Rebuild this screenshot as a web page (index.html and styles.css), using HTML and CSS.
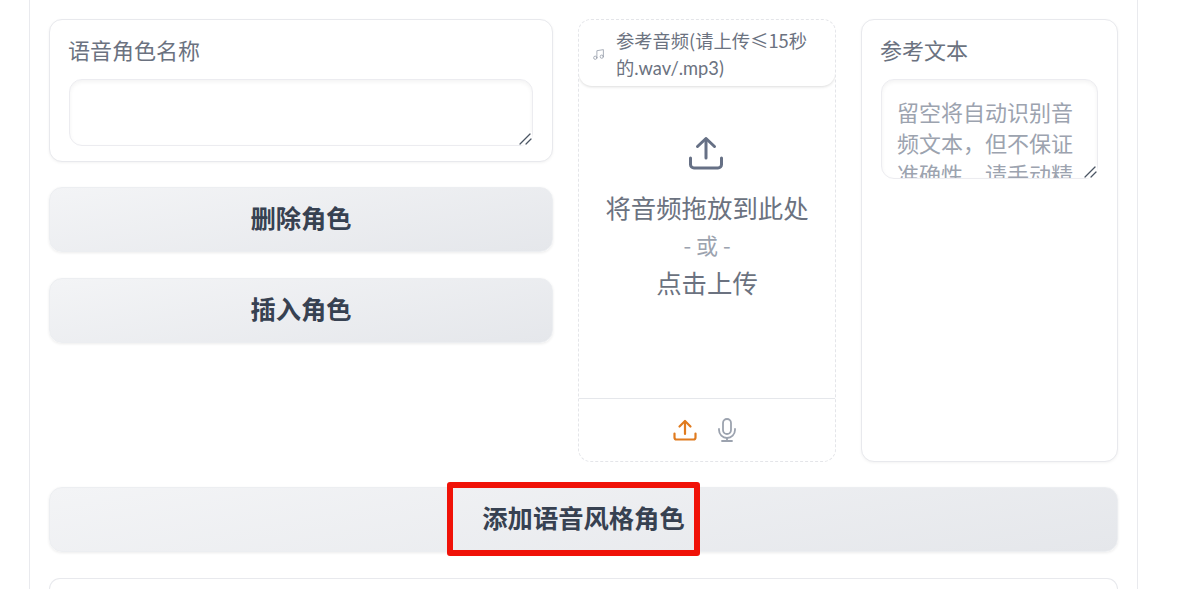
FILE: index.html
```html
<!DOCTYPE html>
<html lang="zh">
<head>
<meta charset="utf-8">
<title>语音角色</title>
<link rel="stylesheet" href="styles.css">
</head>
<body>
<main class="panel">
  <div class="columns">
    <div class="col-left">
      <label class="card name-card">
        <span class="label">语音角色名称</span>
        <span class="input-wrap">
          <textarea class="input name-input"></textarea>
          <svg class="grip" viewBox="0 0 13 13" fill="none" stroke="#4b5563" stroke-width="1.200" stroke-linecap="round"><path d="M1 12 11 2"/><path d="M7 12l5-5"/></svg>
        </span>
      </label>
      <button class="btn">删除角色</button>
      <button class="btn">插入角色</button>
    </div>
    <section class="audio">
      <div class="audio-head">
        <svg class="note" viewBox="0 0 24 24" fill="none" stroke="currentColor" stroke-width="1.600" stroke-linecap="round" stroke-linejoin="round"><path d="M9 18V5l12-2v13"/><circle cx="6" cy="18" r="3"/><circle cx="18" cy="16" r="3"/></svg>
        <span class="audio-title">参考音频(请上传≤15秒的<span class="latin">.wav/.mp3)</span></span>
      </div>
      <div class="drop">
        <svg class="drop-icon" viewBox="0 0 36 36" fill="none" stroke="currentColor" stroke-width="3" stroke-linecap="round" stroke-linejoin="round"><path d="M18 23V4"/><path d="M9.500 11.500 18 3.500l8.500 8"/><path d="M2.500 23v6.500a3.500 3.500 0 0 0 3.500 3.500h24a3.500 3.500 0 0 0 3.500-3.500V23"/></svg>
        <span class="drop-main">将音频拖放到此处</span>
        <span class="drop-or">- 或 -</span>
        <span class="drop-main">点击上传</span>
      </div>
      <div class="sources">
        <svg class="src-icon upload" viewBox="0 0 24 24" fill="none" stroke="currentColor" stroke-width="2.200" stroke-linecap="round" stroke-linejoin="round"><path d="M12 16V3.500"/><path d="M6.500 8.500 12 3l5.500 5.500"/><path d="M1.500 15.500v4a2 2 0 0 0 2 2h17a2 2 0 0 0 2-2v-4"/></svg>
        <svg class="src-icon mic" viewBox="0 0 24 24" fill="none" stroke="currentColor" stroke-width="1.800" stroke-linecap="round" stroke-linejoin="round"><rect x="8" y="1" width="8" height="15" rx="4"/><path d="M4 11v1a8 8 0 0 0 16 0v-1"/><path d="M12 20v3"/><path d="M7 23h10"/></svg>
      </div>
    </section>
    <label class="card text-card">
      <span class="label">参考文本</span>
      <span class="input-wrap">
        <textarea class="input text-input" placeholder="留空将自动识别音频文本，但不保证准确性，请手动精确填写参考文本"></textarea>
        <svg class="grip" viewBox="0 0 13 13" fill="none" stroke="#4b5563" stroke-width="1.200" stroke-linecap="round"><path d="M1 12 11 2"/><path d="M7 12l5-5"/></svg>
      </span>
    </label>
  </div>
  <div class="add-row">
    <button class="btn">添加语音风格角色</button>
    <div class="highlight"></div>
  </div>
  <div class="card next-card"></div>
</main>
</body>
</html>
```

FILE: styles.css
```css
* { box-sizing: border-box; }
html, body { margin: 0; height: 589px; overflow: hidden; background: #fff; }
body {
  font-family: "Noto Sans CJK SC", "Noto Sans", sans-serif;
  color: #374151;
}
.panel {
  width: 1109px;
  height: 589px;
  overflow: hidden;
  margin-left: 29px;
  padding: 19px 19px 0;
  border-left: 1px solid #e9eaee;
  border-right: 1px solid #e9eaee;
}
.columns {
  display: grid;
  grid-template-columns: 504px 258px 257px;
  gap: 25px;
  height: 443px;
}
.col-left { display: flex; flex-direction: column; gap: 25px; align-items: stretch; }
.card {
  display: block;
  background: #fff;
  border: 1px solid #e8e9ed;
  border-radius: 13px;
  box-shadow: 0 1px 3px rgba(0, 0, 0, .05);
}
.name-card { height: 143px; padding: 13px 19px 0; }
.text-card { padding: 13px 19px 0; }
.label {
  display: block;
  font-size: 22px;
  line-height: 32px;
  height: 32px;
  margin-left: -1px;
  color: #6b7280;
}
.input-wrap { display: block; position: relative; margin-top: 14px; }
.input {
  display: block;
  width: 100%;
  border: 1px solid #ececf0;
  border-radius: 13px;
  background: #fff;
  box-shadow: inset 0 2px 4px rgba(0, 0, 0, .05);
  outline: none;
  font-family: inherit;
  font-size: 22px;
  line-height: 31px;
  color: #374151;
  resize: none;
}
.grip {
  position: absolute;
  right: 1px;
  bottom: 1px;
  width: 13px;
  height: 13px;
  background: #fff;
}
.name-input { height: 67px; padding: 8px 15px; }
.text-input { height: 100px; padding: 16px 15px 0; overflow: hidden; }
.text-input::placeholder { color: #9ca3af; opacity: 1; }
.btn {
  display: block;
  width: 100%;
  height: 65px;
  padding: 0 0 6px;
  border: 1px solid #eceef1;
  border-radius: 13px;
  background: linear-gradient(170deg, #f3f4f6, #e5e7eb);
  box-shadow: 0 1px 3px rgba(0, 0, 0, .08);
  font-family: inherit;
  font-size: 25.300px;
  font-weight: 700;
  color: #374151;
}
.col-left .btn:nth-of-type(2) { margin-top: 1px; }
.audio {
  display: flex;
  flex-direction: column;
  border: 1px dashed #e4e5e9;
  border-radius: 13px;
  background: #fff;
  overflow: hidden;
}
.audio-head {
  display: flex;
  align-items: center;
  gap: 11px;
  height: 66px;
  flex: none;
  padding: 2px 20px 0 13px;
  border-radius: 0 0 13px 13px;
  box-shadow: 0 1px 3px rgba(0, 0, 0, .14);
}
.note { width: 13px; height: 13px; flex: none; color: #9ca3af; }
.audio-title {
  font-size: 18.300px;
  line-height: 27px;
  color: #6b7280;
}
.latin { font-family: Lato, sans-serif; }
.drop {
  flex: 1;
  display: flex;
  flex-direction: column;
  align-items: center;
  padding-top: 49px;
  color: #6b7280;
}
.drop-icon { width: 36px; height: 36px; color: #667085; margin: 0 3px 17px 0; }
.drop-main { font-size: 25.400px; line-height: 38px; }
.drop-or { font-size: 22px; line-height: 37px; color: #9ca3af; }
.sources {
  display: flex;
  justify-content: center;
  align-items: center;
  gap: 18px;
  height: 63px;
  flex: none;
  padding-right: 2px;
  border-top: 1px solid #e5e7eb;
}
.src-icon { width: 24px; height: 26px; }
.upload { color: #e07b1f; }
.mic { color: #9ca3af; }
.add-row { position: relative; margin-top: 25px; }
.highlight {
  position: absolute;
  left: 398px;
  top: -5px;
  width: 253px;
  height: 74px;
  border: 6px solid #f01208;
  border-radius: 3px;
}
.next-card {
  height: 11px;
  margin-top: 26px;
  border-bottom: 0;
  border-radius: 13px 13px 0 0;
  box-shadow: none;
}
```
